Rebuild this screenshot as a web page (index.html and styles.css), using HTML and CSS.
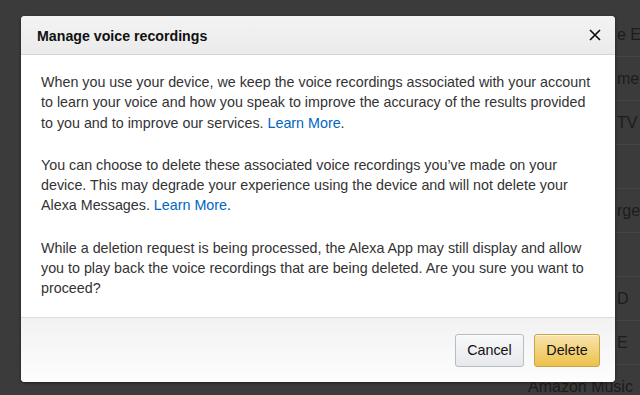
FILE: index.html
```html
<!DOCTYPE html>
<html lang="en">
<head>
<meta charset="utf-8">
<title>Manage voice recordings</title>
<link rel="stylesheet" href="styles.css">
</head>
<body>
<div class="page">
  <ul class="bg-list">
    <li class="row shift">e Ex</li>
    <li class="row shift">me I</li>
    <li class="row shift">TV</li>
    <li class="row shift"></li>
    <li class="row shift">rge</li>
    <li class="row shift"></li>
    <li class="row shift">D</li>
    <li class="row shift">E</li>
    <li class="row">Amazon Music</li>
  </ul>
</div>
<div class="modal" role="dialog">
  <div class="modal-header">
    <h2 class="modal-title">Manage voice recordings</h2>
    <button class="close" aria-label="Close">
      <svg width="12" height="12" viewBox="0 0 12 12"><path d="M1 1L11 11M11 1L1 11" stroke="#111" stroke-width="1.7" fill="none"/></svg>
    </button>
  </div>
  <div class="modal-body">
    <p>When you use your device, we keep the voice recordings associated with your account to learn your voice and how you speak to improve the accuracy of the results provided to you and to improve our services. <a href="#">Learn More</a>.</p>
    <p>You can choose to delete these associated voice recordings you’ve made on your device. This may degrade your experience using the device and will not delete your Alexa Messages. <a href="#">Learn More</a>.</p>
    <p>While a deletion request is being processed, the Alexa App may still display and allow you to play back the voice recordings that are being deleted. Are you sure you want to proceed?</p>
  </div>
  <div class="modal-footer">
    <button class="btn btn-cancel">Cancel</button>
    <button class="btn btn-delete">Delete</button>
  </div>
</div>
</body>
</html>
```
FILE: styles.css
```css
html, body {
  margin: 0;
  padding: 0;
  width: 640px;
  height: 395px;
  overflow: hidden;
  background: #3b3b3b;
  font-family: "Liberation Sans", Arial, sans-serif;
}

.page {
  position: relative;
  width: 640px;
  height: 395px;
}

.bg-list {
  list-style: none;
  margin: 0;
  padding: 13px 0 0 528px;
}

.row {
  height: 43px;
  line-height: 44px;
  border-bottom: 1px solid #444;
  color: #1c1c1c;
  font-size: 16px;
  white-space: nowrap;
  overflow: hidden;
}

.row.shift {
  padding-left: 89px;
}

.row:last-child {
  border-bottom: none;
}

.modal {
  position: absolute;
  left: 21px;
  top: 16px;
  width: 594px;
  height: 366px;
  background: #fff;
  border-radius: 4px;
  box-shadow: 0 1px 3px rgba(0, 0, 0, 0.5);
  overflow: hidden;
  display: flex;
  flex-direction: column;
}

.modal-header {
  height: 38px;
  flex: none;
  display: flex;
  align-items: center;
  justify-content: space-between;
  padding: 0 13px 0 16px;
  background: linear-gradient(#f3f3f3, #ebebeb);
  border-bottom: 1px solid #d6d6d6;
}

.modal-title {
  margin: 0;
  font-size: 14.2px;
  font-weight: bold;
  color: #111;
  padding-top: 1px;
}

.close {
  border: none;
  background: none;
  padding: 0;
  width: 14px;
  height: 14px;
  display: flex;
  align-items: center;
  justify-content: center;
  cursor: pointer;
}

.modal-body {
  flex: 1;
  min-height: 0;
  padding: 17px 20px 0 20px;
  color: #333;
  font-size: 14.3px;
  line-height: 20.3px;
}

.modal-body p {
  margin: 0 0 22px 0;
}

.modal-body p:last-child {
  margin-bottom: 0;
}

.modal-body a {
  color: #0066c0;
  text-decoration: none;
}

.modal-footer {
  height: 65px;
  flex: none;
  box-sizing: border-box;
  display: flex;
  align-items: center;
  justify-content: flex-end;
  gap: 10px;
  padding: 0 15px 0 0;
  background: linear-gradient(#f2f2f2, #fdfdfd);
  border-top: 1px solid #dcdcdc;
}

.btn {
  height: 33px;
  border-radius: 3px;
  font-family: "Liberation Sans", Arial, sans-serif;
  font-size: 14.3px;
  color: #111;
  padding: 0;
  box-shadow: inset 0 1px 0 rgba(255, 255, 255, 0.6);
}

.btn-cancel {
  width: 69px;
  border: 1px solid #b7bbc2;
  background: linear-gradient(#f7f8fa, #e7e9ec);
}

.btn-delete {
  width: 66px;
  border: 1px solid #c9a548;
  background: linear-gradient(#f8e3ad, #eec14b);
}
```
